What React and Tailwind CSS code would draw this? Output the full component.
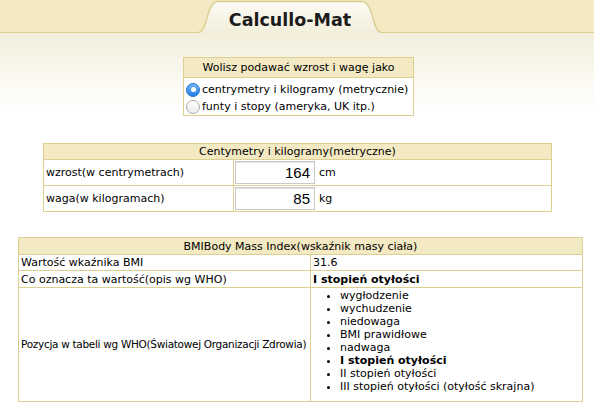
import React from "react";

const font = { fontFamily: '"DejaVu Sans", Verdana, sans-serif' };

const levels = [
  { label: "wygłodzenie" },
  { label: "wychudzenie" },
  { label: "niedowaga" },
  { label: "BMI prawidłowe" },
  { label: "nadwaga" },
  { label: "I stopień otyłości", active: true },
  { label: "II stopień otyłości" },
  { label: "III stopień otyłości (otyłość skrajna)" },
];

const Radio = ({ checked }) =>
  checked ? (
    <span className="inline-flex shrink-0 items-center justify-center w-[14px] h-[14px] rounded-full bg-gradient-to-b from-[#6fb4f5] to-[#1d7fe6] border border-[#2a76c9] mr-[1px]">
      <span className="w-[5px] h-[5px] rounded-full bg-white" />
    </span>
  ) : (
    <span className="inline-block shrink-0 w-[14px] h-[14px] rounded-full bg-gradient-to-b from-white to-[#ececec] border border-[#a9a9a9] mr-[1px]" />
  );

const Header = () => (
  <div className="relative h-[33px] bg-[#f3e9c2] border-b border-[#dccf92] flex justify-center">
    <div className="relative w-[184px] h-[34px] -translate-x-[7px] flex justify-center">
      <svg className="absolute left-0 top-0" width="184" height="34" viewBox="0 0 184 34">
        <defs>
          <linearGradient id="tab" x1="0" y1="0" x2="0" y2="1">
            <stop offset="0" stopColor="#fcfbf3" />
            <stop offset="1" stopColor="#f2eedb" />
          </linearGradient>
        </defs>
        <path d="M0 34 L0 32.5 C10 32.5 8 2 20 1.5 L164 1.5 C176 2 174 32.5 184 32.5 L184 34 Z" fill="url(#tab)" />
        <path d="M0 32.5 C10 32.5 8 2 20 1.5 L164 1.5 C176 2 174 32.5 184 32.5" fill="none" stroke="#dccf92" strokeWidth="1.5" />
      </svg>
      <span className="relative pt-[10px] text-[17.5px] leading-[21px] font-bold text-[#1b1b1b]" style={font}>
        Calcullo-Mat
      </span>
    </div>
  </div>
);

const th = "bg-[#f3e9c2] border border-[#dccf92] font-normal text-center";
const td = "bg-white border border-[#dccf92] text-left";

export default function App() {
  return (
    <div className="w-[594px] min-h-[409px] bg-gradient-to-b from-[#f3efdc] from-[33px] to-white to-[110px] text-[11px] leading-[13px] text-black" style={font}>
      <Header />

      <table className="mt-[24px] border-collapse w-[231px] ml-[183px]">
        <thead>
          <tr>
            <th className={`${th} h-[20px]`}>Wolisz podawać wzrost i wagę jako</th>
          </tr>
        </thead>
        <tbody>
          <tr>
            <td className={`${td} pt-[3px] px-[2px] pb-0 whitespace-nowrap`}>
              <label className="flex items-center gap-[1px] h-[17px]">
                <Radio checked /> centrymetry i kilogramy (metrycznie)
              </label>
              <label className="flex items-center gap-[1px] h-[17px]">
                <Radio /> funty i stopy (ameryka, UK itp.)
              </label>
            </td>
          </tr>
        </tbody>
      </table>

      <table className="mt-[27px] border-collapse w-[509px] ml-[43px]">
        <thead>
          <tr>
            <th colSpan={2} className={`${th} h-[16px]`}>
              Centymetry i kilogramy(metryczne)
            </th>
          </tr>
        </thead>
        <tbody>
          {[
            ["wzrost(w centrymetrach)", "164", "cm"],
            ["waga(w kilogramach)", "85", "kg"],
          ].map(([label, value, unit]) => (
            <tr key={label} className="h-[26px]">
              <td className={`${td} w-[190px] px-[2px]`}>{label}</td>
              <td className={`${td} px-[1px]`}>
                <div className="flex items-center gap-[4px]">
                  <div
                    className="w-[80px] h-[23px] border border-[#c9c9c9] shadow-[inset_0_1px_1px_rgba(0,0,0,0.12)] bg-white text-right pr-[4px] text-[15px] leading-[22px]"
                    style={{ fontFamily: '"Liberation Sans", Arial, sans-serif' }}
                  >
                    {value}
                  </div>
                  <span>{unit}</span>
                </div>
              </td>
            </tr>
          ))}
        </tbody>
      </table>

      <table className="mt-[25px] border-collapse table-fixed w-[565px] ml-[18px]">
        <colgroup>
          <col className="w-[292px]" />
          <col />
        </colgroup>
        <thead>
          <tr>
            <th colSpan={2} className={`${th} h-[17px]`}>
              BMIBody Mass Index(wskaźnik masy ciała)
            </th>
          </tr>
        </thead>
        <tbody>
          <tr className="h-[16px]">
            <td className={`${td} px-[2px]`}>Wartość wkaźnika BMI</td>
            <td className={`${td} px-[2px]`}>31.6</td>
          </tr>
          <tr className="h-[17px]">
            <td className={`${td} px-[2px]`}>Co oznacza ta wartość(opis wg WHO)</td>
            <td className={`${td} px-[2px] font-bold`}>I stopień otyłości</td>
          </tr>
          <tr>
            <td className={`${td} px-[2px] align-middle whitespace-nowrap text-[10.5px] tracking-[-0.3px]`}>
              Pozycja w tabeli wg WHO(Światowej Organizacji Zdrowia)
            </td>
            <td className={`${td} px-[2px] pt-[1px] pb-[8px]`}>
              <ul className="list-disc pl-[27px]">
                {levels.map((l) => (
                  <li key={l.label} className={l.active ? "font-bold" : ""}>
                    {l.label}
                  </li>
                ))}
              </ul>
            </td>
          </tr>
        </tbody>
      </table>
    </div>
  );
}
